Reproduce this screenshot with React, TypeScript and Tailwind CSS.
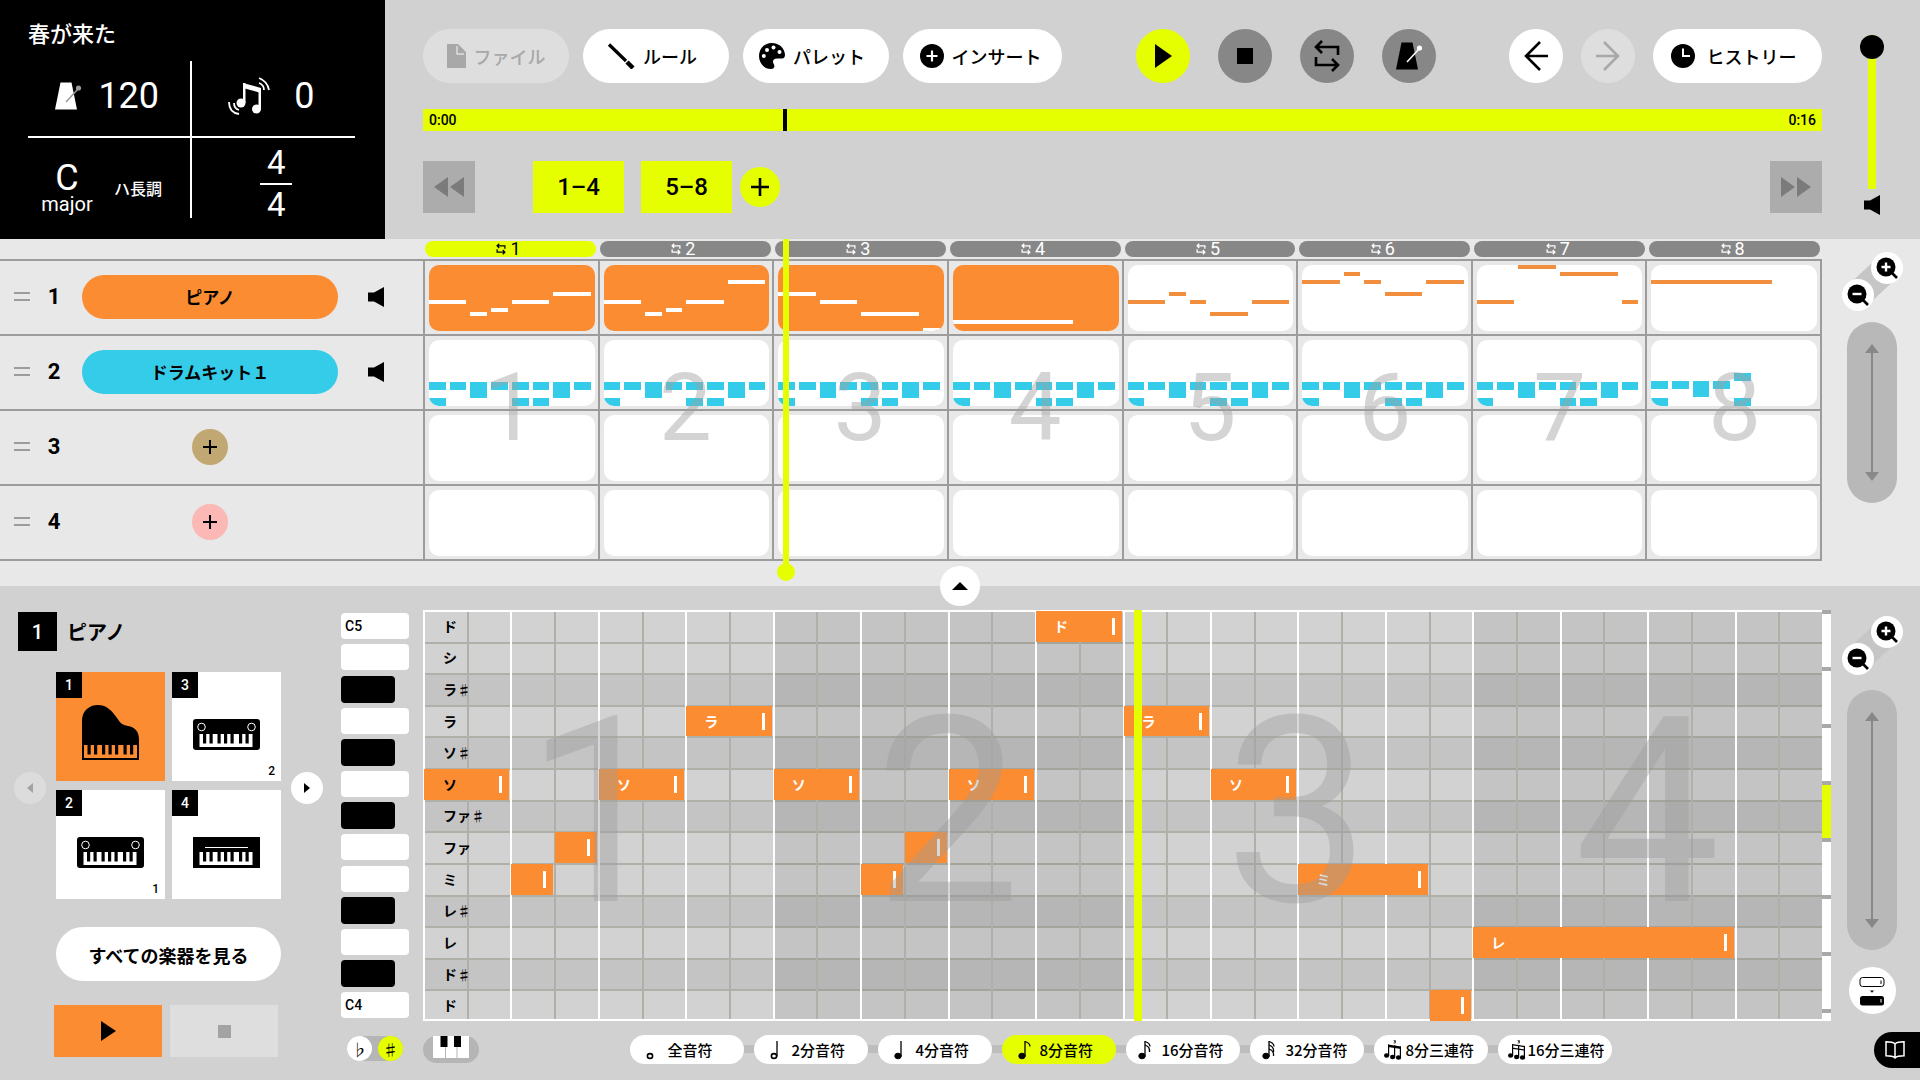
import type { ReactNode } from "react";
import clsx from "clsx";

const NUM = "font-['Roboto','Noto_Sans_CJK_JP',sans-serif]";

const PITCHES = ["ド", "シ", "ラ♯", "ラ", "ソ♯", "ソ", "ファ♯", "ファ", "ミ", "レ♯", "レ", "ド♯", "ド"];

// [row in PITCHES, start in eighths, length in eighths]
const ROLL: [number, number, number][] = [
  [5, 0, 2], [8, 2, 1], [7, 3, 1], [5, 4, 2], [3, 6, 2],
  [5, 8, 2], [8, 10, 1], [7, 11, 1], [5, 12, 2], [0, 14, 2],
  [3, 16, 2], [5, 18, 2], [8, 20, 3], [12, 23, 1], [10, 24, 6],
];

// [semitones above C4, start, length] for every bar
const PIANO: [number, number, number][][] = [
  [[7, 0, 2], [4, 2, 1], [5, 3, 1], [7, 4, 2], [9, 6, 2]],
  [[7, 0, 2], [4, 2, 1], [5, 3, 1], [7, 4, 2], [12, 6, 2]],
  [[9, 0, 2], [7, 2, 2], [4, 4, 3], [0, 7, 1]],
  [[2, 0, 6]],
  [[7, 0, 2], [9, 2, 1], [7, 3, 1], [4, 4, 2], [7, 6, 2]],
  [[12, 0, 2], [14, 2, 1], [12, 3, 1], [9, 4, 2], [12, 6, 2]],
  [[7, 0, 2], [16, 2, 2], [14, 4, 3], [7, 7, 1]],
  [[12, 0, 6]],
];

// [step, top, height]
const BEAT: [number, number, number][] = [
  [0, 42, 8], [1, 42, 8], [2, 42, 16], [3, 42, 8], [4, 42, 8], [5, 42, 8], [6, 42, 16], [7, 42, 8],
  [0, 58, 8], [4, 58, 8], [5, 58, 8],
];
const LAST_BEAT: [number, number, number][] = [
  [0, 41, 8], [1, 41, 8], [2, 41, 16], [3, 41, 8], [4, 33, 8], [0, 58, 8], [4, 58, 8],
];

const BARS = [1, 2, 3, 4, 5, 6, 7, 8];

function Metronome({ hand, className }: { hand: string; className?: string }) {
  return (
    <svg viewBox="0 0 28 28" className={clsx("size-7", className)}>
      <path d="M6.500 0.500h11l5.500 27H1z" fill="currentColor" />
      <path d="M12 20 24 7" stroke={hand} strokeWidth="1.500" />
      <circle cx="24.500" cy="6" r="2.600" fill={hand} />
    </svg>
  );
}

function LoopIcon({ className, stroke = 2.6 }: { className?: string; stroke?: number }) {
  return (
    <svg viewBox="0 0 28 34" className={className} fill="none" stroke="currentColor" strokeWidth={stroke}>
      <path d="M9 2 3 8l6 6M3 8h22v8M19 20l6 6-6 6M25 26H3v-8" />
    </svg>
  );
}

function Speaker({ className }: { className?: string }) {
  return (
    <svg viewBox="0 0 16 20" className={className}>
      <path d="M0 5.500h6L16 0v20L6 14.500H0z" fill="currentColor" />
    </svg>
  );
}

function PlusGlyph({ className }: { className?: string }) {
  return (
    <svg viewBox="0 0 18 18" className={className} stroke="currentColor" strokeWidth="2.600">
      <path d="M9 0v18M0 9h18" />
    </svg>
  );
}

function PillButton({ label, icon, disabled, className }: { label: string; icon: ReactNode; disabled?: boolean; className: string }) {
  return (
    <button
      disabled={disabled}
      className={clsx(
        "flex h-[54px] items-center justify-center gap-2 whitespace-nowrap rounded-full text-lg font-medium",
        disabled ? "bg-[#dedede] text-[#a8a8a8]" : "bg-white text-black",
        className
      )}
    >
      {icon}
      {label}
    </button>
  );
}

function RoundButton({ label, className, children }: { label: string; className: string; children: ReactNode }) {
  return (
    <button aria-label={label} className={clsx("flex size-[54px] items-center justify-center rounded-full", className)}>
      {children}
    </button>
  );
}

function Header() {
  return (
    <header className="flex bg-[#d1d1d1]">
      <div className="w-[385px] shrink-0 bg-black px-7 pt-4 text-white">
        <h1 className="text-[22px] leading-8 font-medium">春が来た</h1>
        <div className="mt-[13px] grid w-[327px] grid-cols-2">
          <div className="flex h-[77px] items-center justify-center gap-4 border-r-2 border-b-2 border-white pb-1.5 pr-1">
            <Metronome hand="#999" />
            <span className={`${NUM} text-4xl leading-10`}>120</span>
          </div>
          <div className="flex h-[77px] items-center justify-center gap-6 border-b-2 border-white pb-1.5 pr-1">
            <svg viewBox="0 0 42 38" className="h-[38px] w-[42px]" fill="currentColor">
              <path d="M15 6l18 5v5l-18-5z" />
              <path d="M15 6h2.500v20H15zM30.500 11H33v21h-2.500z" />
              <ellipse cx="13" cy="26" rx="4.500" ry="4.500" />
              <ellipse cx="28.500" cy="32" rx="4.500" ry="4.500" />
              <path d="M31 1c5 2 9 6 10 12M31 6c3 1 5 4 5 7M1 25c0 6 3 11 10 12M6 26c0 4 2 6 5 7" fill="none" stroke="currentColor" strokeWidth="1.800" />
            </svg>
            <span className={`${NUM} text-4xl leading-10`}>0</span>
          </div>
          <div className="flex h-20 items-center border-r-2 border-white pt-3">
            <div className={`${NUM} w-[78px] pt-2 text-center`}>
              <div className="text-4xl leading-8">C</div>
              <div className="text-xl leading-5">major</div>
            </div>
            <span className="pl-2 pt-2 text-base font-medium">ハ長調</span>
          </div>
          <div className={`${NUM} flex h-20 flex-col items-center justify-center gap-1 pt-3 pl-1.5 text-[33px] leading-8`}>
            <span>4</span>
            <span className="h-0.5 w-8 shrink-0 bg-white" />
            <span>4</span>
          </div>
        </div>
      </div>

      <div className="min-w-0 flex-1 pt-[29px] pb-[26px] pl-[38px]">
        <div className="flex items-center justify-between">
          <div className="flex gap-[14px]">
            <PillButton
              disabled
              className="w-[146px]"
              label="ファイル"
              icon={
                <svg viewBox="0 0 19 24" className="h-6 w-[19px]">
                  <path d="M0 0h11l8 8v16H0z" fill="currentColor" />
                  <path d="M10 2v8h7" stroke="#dedede" strokeWidth="1.500" fill="none" />
                </svg>
              }
            />
            <PillButton
              className="w-[146px] pr-2"
              label="ルール"
              icon={
                <svg viewBox="0 0 28 26" className="h-[26px] w-7" stroke="currentColor">
                  <path d="M2 1.500 19 18" strokeWidth="3.200" />
                  <path d="M20 19 26 25" strokeWidth="4.500" />
                </svg>
              }
            />
            <PillButton
              className="w-[146px] pr-2"
              label="パレット"
              icon={
                <svg viewBox="0 0 26 26" className="size-[26px]">
                  <path d="M13 0C5 0 0 6 0 13s5 13 12 13c3 0 4-2 3-4.500-2-3-1-6 3-6h5c2 0 3-1.500 3-4C25.500 5 20 0 13 0z" fill="currentColor" />
                  <g fill="#fff">
                    <circle cx="4.800" cy="13" r="2" />
                    <circle cx="8" cy="7" r="2" />
                    <circle cx="14.500" cy="4.500" r="2" />
                    <circle cx="20.500" cy="9" r="2" />
                  </g>
                </svg>
              }
            />
            <PillButton
              className="w-[159px] pr-1"
              label="インサート"
              icon={
                <svg viewBox="0 0 24 24" className="size-6">
                  <circle cx="12" cy="12" r="12" fill="currentColor" />
                  <path d="M12 6.500v11M6.500 12h11" stroke="#fff" strokeWidth="2.200" />
                </svg>
              }
            />
          </div>
          <div className="flex gap-7">
            <RoundButton label="再生" className="bg-[#e6ff00]">
              <svg viewBox="0 0 17 24" className="ml-0.5 h-6 w-[17px]"><path d="M0 0 17 12 0 24z" /></svg>
            </RoundButton>
            <RoundButton label="停止" className="bg-[#878787]">
              <span className="size-4 bg-black" />
            </RoundButton>
            <RoundButton label="ループ" className="bg-[#878787]">
              <LoopIcon className="h-[34px] w-7" />
            </RoundButton>
            <RoundButton label="メトロノーム" className="bg-[#878787]">
              <Metronome hand="#fff" />
            </RoundButton>
          </div>
          <div className="flex gap-[18px]">
            <RoundButton label="元に戻す" className="bg-white">
              <svg viewBox="0 0 24 30" className="h-[30px] w-6" fill="none" stroke="currentColor" strokeWidth="2.600">
                <path d="M16 1 2 15l14 14M2 15h22" />
              </svg>
            </RoundButton>
            <RoundButton label="やり直す" className="bg-[#dedede] text-[#a8a8a8]">
              <svg viewBox="0 0 24 30" className="h-[30px] w-6" fill="none" stroke="currentColor" strokeWidth="2.600">
                <path d="M8 1l14 14L8 29M22 15H0" />
              </svg>
            </RoundButton>
            <PillButton
              className="w-[169px] pr-2"
              label="ヒストリー"
              icon={
                <svg viewBox="0 0 24 24" className="mr-1 size-6">
                  <circle cx="12" cy="12" r="12" fill="currentColor" />
                  <path d="M12 4.500V12h7" stroke="#fff" strokeWidth="2" fill="none" />
                </svg>
              }
            />
          </div>
        </div>

        <div className="relative mt-[26px] h-[22px]">
          <input
            type="range"
            aria-label="再生位置"
            min={0}
            max={1000}
            defaultValue={258}
            className="block h-[22px] w-full appearance-none bg-[#e6ff00] [&::-webkit-slider-thumb]:h-[22px] [&::-webkit-slider-thumb]:w-1 [&::-webkit-slider-thumb]:appearance-none [&::-webkit-slider-thumb]:bg-black"
          />
          <div className={`${NUM} pointer-events-none absolute inset-0 flex items-center justify-between px-1.5 text-sm font-medium`}>
            <span>0:00</span>
            <span>0:16</span>
          </div>
        </div>

        <div className="mt-[30px] flex items-center">
          <button aria-label="前へ" className="flex size-[52px] items-center justify-center bg-[#acacac] text-[#7b7b7b]">
            <svg viewBox="0 0 30 20" className="h-5 w-[30px]" fill="currentColor"><path d="M14 0v20L0 10zM30 0v20L16 10z" /></svg>
          </button>
          <button className={`${NUM} ml-[58px] h-[52px] w-[91px] bg-[#e6ff00] text-2xl font-medium`}>1–4</button>
          <button className={`${NUM} ml-[17px] h-[52px] w-[91px] bg-[#e6ff00] text-2xl font-medium`}>5–8</button>
          <button aria-label="セクションを追加" className="ml-2 flex size-10 items-center justify-center rounded-full bg-[#e6ff00]">
            <PlusGlyph className="size-[18px]" />
          </button>
          <button aria-label="次へ" className="ml-auto flex size-[52px] items-center justify-center bg-[#acacac] text-[#7b7b7b]">
            <svg viewBox="0 0 30 20" className="h-5 w-[30px]" fill="currentColor"><path d="M0 0v20l14-10zM16 0v20l14-10z" /></svg>
          </button>
        </div>
      </div>

      <div className="flex w-[98px] shrink-0 flex-col items-center pt-[35px] pl-0.5">
        <input
          type="range"
          aria-label="音量"
          defaultValue={100}
          className="h-[154px] w-6 appearance-none bg-[linear-gradient(#e6ff00,#e6ff00)] bg-[length:8px_100%] bg-center bg-no-repeat [direction:rtl] [writing-mode:vertical-lr] [&::-webkit-slider-thumb]:size-6 [&::-webkit-slider-thumb]:appearance-none [&::-webkit-slider-thumb]:rounded-full [&::-webkit-slider-thumb]:bg-black"
        />
        <Speaker className="mt-1.5 h-5 w-4" />
      </div>
    </header>
  );
}

function ZoomButtons() {
  return (
    <div className="relative flex w-[61px] flex-col">
      <svg viewBox="0 0 61 59" className="absolute inset-0 text-[#c6c6c6]"><path d="M17 42 44 17" stroke="currentColor" strokeWidth="28" /></svg>
      {[true, false].map((plus) => (
        <button
          key={String(plus)}
          aria-label={plus ? "拡大" : "縮小"}
          className={clsx("relative flex size-8 items-center justify-center rounded-full bg-white", plus ? "self-end" : "-mt-[5px]")}
        >
          <svg viewBox="0 0 22 22" className="size-[22px]">
            <path d="m14 14 7 7" stroke="currentColor" strokeWidth="2.600" />
            <circle cx="10" cy="10" r="9.500" fill="currentColor" />
            <path d={plus ? "M10 5.500v9M5.500 10h9" : "M5.500 10h9"} stroke="#fff" strokeWidth="2.400" />
          </svg>
        </button>
      ))}
    </div>
  );
}

function ScrollPad({ className }: { className: string }) {
  return (
    <div className={clsx("flex w-[50px] flex-col items-center rounded-full bg-[#b8b8b8] py-[22px] text-[#888]", className)}>
      <svg viewBox="0 0 14 9" className="h-[9px] w-[14px] shrink-0" fill="currentColor"><path d="M7 0l7 9H0z" /></svg>
      <span className="w-0.5 flex-1 bg-[#888]" />
      <svg viewBox="0 0 14 9" className="h-[9px] w-[14px] shrink-0" fill="currentColor"><path d="M7 9l7-9H0z" /></svg>
    </div>
  );
}

function Block({ step, len, top, height, className }: { step: number; len: number; top: number; height: number; className: string }) {
  return (
    <span
      className={clsx("absolute border-r-4 border-transparent bg-clip-padding", className)}
      style={{ left: `${step * 12.5}%`, width: `${len * 12.5}%`, top, height }}
    />
  );
}

function TrackRow({ index }: { index: number }) {
  return (
    <div className="flex h-[75px] border-t-2 border-[#9c9c9c]">
      <div className="flex w-[423px] shrink-0 items-center pb-0.5">
        <div className="ml-[14px] h-[9px] w-4 border-y-2 border-[#9c9c9c]" />
        <span className={`${NUM} ml-4 w-4 text-center text-[22px] font-bold`}>{index + 1}</span>
        {index < 2 ? (
          <>
            <button className={clsx("ml-5 h-11 w-64 rounded-full text-[17px] font-bold", index === 0 ? "bg-[#fb8c32]" : "bg-[#35cce9]")}>
              {index === 0 ? "ピアノ" : "ドラムキット１"}
            </button>
            <button aria-label="ミュート" className="ml-[30px]"><Speaker className="h-5 w-4" /></button>
          </>
        ) : (
          <button
            aria-label="トラックを追加"
            className={clsx("ml-[130px] flex size-9 items-center justify-center rounded-full", index === 2 ? "bg-[#c1a772]" : "bg-[#fbb8b5]")}
          >
            <PlusGlyph className="size-[14px]" />
          </button>
        )}
      </div>
      <div className="grid flex-1 grid-cols-8 border-r-2 border-[#9c9c9c]">
        {BARS.map((bar, i) => (
          <div key={bar} className="border-l-2 border-[#9c9c9c] pt-1 pb-[3px] pl-1 pr-[3px]">
            <div className={clsx("relative h-full overflow-hidden rounded-[10px]", index === 0 && i < 4 ? "bg-[#fb8c32]" : "bg-white")}>
              {index === 0 &&
                PIANO[i].map(([semi, step, len]) => (
                  <Block key={step} step={step} len={len} top={Math.max(0, 63 - semi * 4)} height={4} className={i < 4 ? "bg-white" : "bg-[#f28f3e]"} />
                ))}
              {index === 1 &&
                (i < 7 ? BEAT : LAST_BEAT).map(([step, top, height]) => (
                  <Block key={`${step}-${top}`} step={step} len={1} top={top} height={height} className="bg-[#35cce9]" />
                ))}
            </div>
          </div>
        ))}
      </div>
    </div>
  );
}

function Tracks() {
  return (
    <section className="flex bg-[#e8e8e8]">
      <div className="relative flex-1 pb-[25px]">
        <div className="grid h-5 grid-cols-8 items-center pl-[423px]">
          {BARS.map((bar) => (
            <button
              key={bar}
              className={clsx(`${NUM} mx-0.5 flex h-4 items-center justify-center gap-1 rounded-full pr-1 text-lg leading-4`, bar === 1 ? "bg-[#e6ff00] text-black" : "bg-[#878787] text-white")}
            >
              <LoopIcon className="h-3 w-2.5" stroke={3.6} />
              {bar}
            </button>
          ))}
        </div>
        {[0, 1, 2, 3].map((i) => (
          <TrackRow key={i} index={i} />
        ))}
        <div className="border-t-2 border-[#9c9c9c]" />

        <div className="pointer-events-none absolute inset-y-0 right-0 left-[423px]">
          <div className={`${NUM} grid h-full grid-cols-8 items-center pb-2.5 text-center text-[94px] leading-none text-[#a0a0a0]/45`}>
            {BARS.map((bar) => (
              <span key={bar}>{bar}</span>
            ))}
          </div>
          <div className="absolute top-0 bottom-[5px] left-[25.7%] flex w-1.5 flex-col items-center">
            <span className="w-1.5 flex-1 bg-[#e6ff00]" />
            <span className="-mt-1 size-[18px] shrink-0 rounded-full bg-[#e6ff00]" />
          </div>
        </div>
      </div>
      <div className="flex w-[98px] shrink-0 flex-col items-center pt-[13px] pl-0.5">
        <ZoomButtons />
        <ScrollPad className="mt-[11px] h-[181px]" />
      </div>
    </section>
  );
}

function Keyboard({ x, y, fill }: { x: number; y: number; fill: string }) {
  return (
    <g transform={`translate(${x} ${y})`}>
      <path d="M0 0h53v13H0z" fill={fill} />
      {[3.5, 10, 18, 24.5, 31, 39.5, 46].map((k) => (
        <path key={k} d={`M${k} 0h3.200v9.500h-3.200z`} />
      ))}
    </g>
  );
}

function InstrumentIcon({ kind }: { kind: string }) {
  if (kind === "grand") {
    return (
      <svg viewBox="0 0 57 55" className="mt-3 h-[55px] w-[57px]">
        <path d="M0 55V16C0 6 7 0 16 0c9 0 14 6 19 13 4 6 6 7 11 8 7 1 11 6 11 13v21z" />
        <Keyboard x={2} y={40} fill="#fb8c32" />
      </svg>
    );
  }
  return (
    <svg viewBox="0 0 67 31" className="mt-4 h-[31px] w-[67px]">
      <rect width="67" height="31" rx={kind === "synth" ? 0 : 3} />
      {kind === "synth" ? (
        <path d="M12 10.500h43" stroke="#fff" strokeWidth="1" />
      ) : (
        <g fill="none" stroke="#fff" strokeWidth="1">
          <circle cx="8.500" cy="8" r="3.800" />
          <circle cx="58.500" cy="8" r="3.800" />
        </g>
      )}
      <Keyboard x={6.5} y={15} fill="#fff" />
    </svg>
  );
}

const INSTRUMENTS = [
  { slot: 1, kind: "grand", count: "" },
  { slot: 3, kind: "organ", count: "2" },
  { slot: 2, kind: "organ", count: "1" },
  { slot: 4, kind: "synth", count: "" },
];

function Instruments() {
  return (
    <div className="w-[341px] shrink-0 pt-0.5">
      <div className="flex items-center gap-2.5 pl-[18px]">
        <span className={`${NUM} flex size-[39px] items-center justify-center bg-black text-xl font-medium text-white`}>1</span>
        <h2 className="text-xl leading-8 font-bold">ピアノ</h2>
      </div>
      <div className="mt-[21px] flex items-center gap-2.5 pl-[14px]">
        <button disabled aria-label="前の楽器" className="mt-1 flex size-8 items-center justify-center rounded-full bg-[#dcdcdc] text-[#a3a3a3]">
          <svg viewBox="0 0 6 10" className="h-2.5 w-1.5" fill="currentColor"><path d="M6 0v10L0 5z" /></svg>
        </button>
        <div className="grid grid-cols-2 gap-x-[7px] gap-y-[9px]">
          {INSTRUMENTS.map(({ slot, kind, count }) => (
            <button key={slot} className={clsx(`${NUM} relative flex size-[109px] items-center justify-center`, slot === 1 ? "bg-[#fb8c32]" : "bg-white")}>
              <span className="absolute top-0 left-0 flex size-[26px] items-center justify-center bg-black text-sm font-medium text-white">{slot}</span>
              <InstrumentIcon kind={kind} />
              <span className="absolute right-1.5 bottom-0.5 text-xs font-medium">{count}</span>
            </button>
          ))}
        </div>
        <button aria-label="次の楽器" className="mt-1 flex size-8 items-center justify-center rounded-full bg-white">
          <svg viewBox="0 0 6 10" className="h-2.5 w-1.5"><path d="M0 0v10l6-5z" /></svg>
        </button>
      </div>
      <button className="mt-7 ml-14 h-[54px] w-[225px] rounded-full bg-white pt-0.5 text-lg font-bold">すべての楽器を見る</button>
      <div className="mt-6 ml-[54px] flex gap-2">
        <button aria-label="再生" className="flex h-[52px] w-[108px] items-center justify-center bg-[#fb8c32]">
          <svg viewBox="0 0 15 20" className="h-5 w-[15px]"><path d="M0 0l15 10L0 20z" /></svg>
        </button>
        <button aria-label="停止" className="flex h-[52px] w-[108px] items-center justify-center bg-[#dedede]">
          <span className="size-[13px] bg-[#a3a3a3]" />
        </button>
      </div>
    </div>
  );
}

function PianoRoll() {
  return (
    <div className="relative h-[411px] flex-1 bg-[#d2d2d2]">
      <div className="absolute inset-0 grid grid-rows-13">
        {PITCHES.map((p, i) => (
          <div key={i} className={clsx(i > 0 && "border-t-2 border-[#b0b0a8]", p.includes("♯") && "bg-black/[0.067]")} />
        ))}
      </div>
      <div className="absolute inset-0 grid grid-cols-4">
        {[0, 1, 2, 3].map((i) => (
          <div key={i} className={clsx(i % 2 === 1 && "bg-black/[0.067]")} />
        ))}
      </div>
      <div className="absolute inset-0 grid grid-cols-32 border-y-2 border-white">
        {Array.from({ length: 32 }, (_, i) => (
          <div key={i} className={clsx("border-l-2", i % 2 ? "border-[#b0b0a8]" : "border-white")} />
        ))}
      </div>
      <div className="absolute inset-0 grid grid-cols-32 grid-rows-13">
        {ROLL.map(([row, start, len]) => (
          <div
            key={start}
            className="mt-px mr-px ml-px flex items-center bg-[#fb8c32] pr-[7px] pl-[18px] text-sm leading-none font-bold text-white"
            style={{ gridRow: row + 1, gridColumn: `${start + 1} / span ${len}` }}
          >
            {len > 1 && start > 0 && PITCHES[row]}
            <span className="ml-auto h-[17px] w-[3px] bg-white" />
          </div>
        ))}
      </div>
      <div className={`${NUM} pointer-events-none absolute inset-0 grid grid-cols-4 items-center pb-2 text-center text-[260px] leading-none text-[#9c9c9c]/40`}>
        {[1, 2, 3, 4].map((n) => (
          <span key={n}>{n}</span>
        ))}
      </div>
      <div className="absolute inset-y-0 left-0 grid grid-rows-13 items-center pl-5 text-sm leading-none font-bold">
        {PITCHES.map((p, i) => (
          <span key={i}>{p}</span>
        ))}
      </div>
      <span className="absolute inset-y-0 left-[50.8%] w-2 bg-[#e6ff00]" />
    </div>
  );
}

const LENGTHS = ["全音符", "2分音符", "4分音符", "8分音符", "16分音符", "32分音符", "8分三連符", "16分三連符"];

function NoteIcon({ kind }: { kind: number }) {
  if (kind >= 6) {
    return (
      <svg viewBox="0 0 18 20" className="h-5 w-[18px] shrink-0" fill="currentColor">
        <path d={kind === 6 ? "M4 4.500 17 6.500V9L4 7z" : "M4 4 17 6v1.200L4 5.200z"} />
        {kind === 7 && <path d="M4 7.500 17 9.500v1.200L4 8.700z" />}
        <path d="M4.600 4.500v11M10.600 5.500v12M16.400 6.500v12" stroke="currentColor" strokeWidth="1.200" />
        <ellipse cx="2.600" cy="15.500" rx="2.600" ry="2.200" />
        <ellipse cx="8.600" cy="17" rx="2.600" ry="2.200" />
        <ellipse cx="14.500" cy="17.500" rx="2.600" ry="2.200" />
        <path d="M9.500.5h2v1.200H10h1.500V3h-2" fill="none" stroke="currentColor" strokeWidth=".6" />
      </svg>
    );
  }
  return (
    <svg viewBox="0 0 14 20" className="h-5 w-[14px] shrink-0" fill="none" stroke="currentColor" strokeWidth="1.300">
      <ellipse cx="4" cy="16" rx={kind < 2 ? 2.6 : 3.2} ry={kind < 2 ? 2.4 : 2.8} fill={kind < 2 ? "none" : "currentColor"} strokeWidth={kind < 2 ? 1.6 : 1} />
      {kind > 0 && <path d="M7 16.500V1" />}
      {kind >= 3 && <path d="M7 1.500c3 1 5 2 5 5" />}
      {kind >= 4 && <path d="M7 5c3 1 5 3 4.500 7" />}
      {kind >= 5 && <path d="M7 9c3 1 5 3 4.500 7" />}
    </svg>
  );
}

function Editor() {
  return (
    <section className="relative flex flex-1 bg-[#d1d1d1] pt-6">
      <button aria-label="パネルを開く" className="absolute -top-5 left-1/2 flex size-10 -translate-x-1/2 items-center justify-center rounded-full bg-white">
        <svg viewBox="0 0 16 8" className="h-2 w-4"><path d="M8 0l8 8H0z" /></svg>
      </button>
      <Instruments />
      <div className="w-[82px] shrink-0">
        <div className={`${NUM} grid h-[411px] grid-rows-13 items-center text-sm leading-none font-medium`}>
          {PITCHES.map((p, i) => (
            <div key={i} className={clsx("flex items-center rounded-[4px] pl-1", p.includes("♯") ? "h-[27px] w-[54px] bg-black" : "h-[26px] w-[68px] bg-white")}>
              {i === 0 && "C5"}
              {i === 12 && "C4"}
            </div>
          ))}
        </div>
        <div className="mt-[15px] ml-1.5 flex w-14 justify-between rounded-full bg-[#b5b5b5] text-base leading-none">
          <button className="size-[25px] rounded-full bg-white">♭</button>
          <button className="size-[25px] rounded-full bg-[#e6ff00]">♯</button>
        </div>
      </div>

      <div className="min-w-0 flex-1">
        <div className="flex">
          <PianoRoll />
          <div className="-mr-[9px] flex h-[411px] w-[9px] flex-col">
            {Array.from({ length: 8 }, (_, i) => (
              <span key={i} className={clsx("border-t-4 border-[#a8a8a8]", i < 7 ? "h-[57px]" : "flex-1", i === 3 ? "bg-[#e6ff00]" : "bg-white")} />
            ))}
          </div>
        </div>
        <div className="mt-[14px] grid grid-cols-[1fr_auto_1fr] pr-1">
          <button aria-label="鍵盤" className="flex h-[27px] w-14 justify-center self-center rounded-full bg-[#b5b5b5]">
            <svg viewBox="0 0 36 22" className="h-[22px] w-9">
              <path d="M0 0h36v22H0z" fill="#fff" />
              <path d="M12.500 0v22M24 0v22" stroke="#b5b5b5" strokeWidth="1" />
              <path d="M7.500 0h7v11h-7zM21 0h7v11h-7z" />
            </svg>
          </button>
          <div className="relative flex gap-2.5">
            <span className="absolute inset-x-8 top-[10px] h-2 bg-[#bdbdbd]" />
            {LENGTHS.map((label, i) => (
              <button
                key={label}
                className={clsx(
                  "relative flex h-[29px] w-[114px] items-center whitespace-nowrap rounded-full text-[15px] leading-none font-medium",
                  i < 4 && "gap-2 pl-4",
                  (i === 4 || i === 5) && "gap-2.5 pl-3",
                  i === 6 && "gap-1 pl-2.5",
                  i === 7 && "gap-0.5 pl-2.5",
                  i === 3 ? "bg-[#e6ff00]" : "bg-white"
                )}
              >
                <NoteIcon kind={i} />
                {label}
              </button>
            ))}
          </div>
        </div>
      </div>

      <div className="flex w-[98px] shrink-0 flex-col items-center pt-1.5 pl-0.5">
        <ZoomButtons />
        <ScrollPad className="mt-[15px] h-[260px]" />
        <button aria-label="表示切り替え" className="mt-[17px] flex size-[47px] items-center justify-center rounded-full bg-white">
          <svg viewBox="0 0 26 30" className="h-[30px] w-[26px]">
            <rect x="1" y="1.500" width="24" height="9" rx="2.500" fill="#fff" stroke="currentColor" strokeWidth="1" />
            <path d="M22 4.500v3.500" stroke="currentColor" />
            <path d="M11 14.500h4l-2 2.200z" />
            <rect x="1" y="20" width="24" height="9.500" rx="2.500" />
            <path d="M22 23v3.500" stroke="#fff" />
          </svg>
        </button>
        <button aria-label="ガイド" className="mt-[18px] flex h-9 w-[46px] items-center self-end rounded-l-full bg-black pl-[11px] text-white">
          <svg viewBox="0 0 20 18" className="h-[18px] w-5" fill="none" stroke="currentColor" strokeWidth="1.500">
            <path d="M10 3C8 1 5 .8 1 .8v14c4 0 7 .2 9 2.200 2-2 5-2.200 9-2.200V.8c-4 0-7 .2-9 2.200zM10 3v14" />
          </svg>
        </button>
      </div>
    </section>
  );
}

export default function App() {
  return (
    <main className="flex min-h-screen flex-col overflow-x-hidden bg-[#d1d1d1] font-['Noto_Sans_CJK_JP',sans-serif] text-black">
      <Header />
      <Tracks />
      <Editor />
    </main>
  );
}
